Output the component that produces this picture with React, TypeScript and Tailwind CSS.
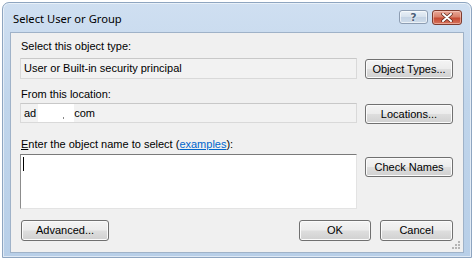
const btn =
  "h-[20px] rounded-[3px] border border-[#707070] bg-[linear-gradient(to_bottom,#f4f4f4_0%,#ececec_48%,#dedede_52%,#d0d0d0_100%)] shadow-[inset_0_0_0_1px_#fbfbfb] text-[11px] text-black flex items-center justify-center leading-none font-['Liberation_Sans',Arial,sans-serif]";

export default function App() {
  return (
    <div className="w-[476px] h-[262px] bg-white overflow-hidden font-['Liberation_Sans',Arial,sans-serif]">
      <div className="ml-[2px] mt-[2px] w-[470px] h-[256px] rounded-t-[7px] border border-[#8ea5c0] bg-[linear-gradient(to_bottom,#cfdff1_0%,#c0d5eb_40%,#b8cfe8_100%)] shadow-[inset_0_0_0_1px_rgba(255,255,255,0.55)] flex flex-col">
        {/* title bar */}
        <div className="h-[29px] flex items-start pl-[10px] pr-[9px]">
          <span className="mt-[8px] text-[11.2px] leading-[15px] text-black font-['Noto_Sans',sans-serif]">
            Select User or Group
          </span>
          <div className="ml-auto mt-[7px] flex items-start gap-[4px]">
            <div className="w-[29px] h-[14px] rounded-[3px] border border-[#8d9db2] bg-[linear-gradient(to_bottom,#e9f0f7_0%,#d6e1ed_50%,#c4d3e4_52%,#cfdcea_100%)] shadow-[inset_0_0_0_1px_rgba(255,255,255,0.6)] flex items-center justify-center">
              <span className="text-[11px] leading-none font-bold text-[#4c5f78] [text-shadow:0_0_1px_#fff,0_0_2px_#fff] font-['DejaVu_Sans',sans-serif]">?</span>
            </div>
            <div className="w-[30px] h-[15px] rounded-[3px] border border-[#7d3b2f] bg-[linear-gradient(to_bottom,#eaa898_0%,#d9806b_45%,#c64a33_55%,#d5735c_100%)] shadow-[inset_0_0_0_1px_rgba(255,220,210,0.5)] flex items-center justify-center">
              <svg width="12" height="9" viewBox="0 0 12 9">
                <path d="M2 1 L10 8 M10 1 L2 8" stroke="#5a2418" strokeWidth="3.4" strokeLinecap="round" />
                <path d="M2 1 L10 8 M10 1 L2 8" stroke="#ffffff" strokeWidth="2" strokeLinecap="round" />
              </svg>
            </div>
          </div>
        </div>

        {/* client area */}
        <div className="relative mx-[7px] h-[221px] bg-[#f0f0f0] border border-[#9fb2c8] flex flex-col pl-[9px] pr-[10px] text-[11px] leading-[13px] text-black">
          <div className="mt-[7px] pl-[1px]">Select this object type:</div>
          <div className="mt-[5px] flex items-start gap-[8px]">
            <div className="w-[337px] h-[21px] border border-[#d9d9d9] border-t-[#c8c8c8] bg-[#f2f2f2] flex items-center pl-[3px]">
              User or Built-in security principal
            </div>
            <div className={btn + " mt-[1px] w-[88px]"}>Object Types...</div>
          </div>

          <div className="mt-[9px] pl-[1px]">From this location:</div>
          <div className="mt-[2px] flex items-start gap-[8px]">
            <div className="w-[337px] h-[20px] border border-[#d9d9d9] border-t-[#c8c8c8] bg-[#f2f2f2] flex items-stretch pl-[3px]">
              <span className="flex items-center">ad</span>
              <span className="w-[36px] ml-[2px] bg-white flex items-end justify-center pb-[3px]">
                <span className="ml-[14px] w-[1px] h-[2px] bg-[#888]" />
              </span>
              <span className="flex items-center">com</span>
            </div>
            <div className={btn + " mt-[1px] w-[88px]"}>Locations...</div>
          </div>

          <div className="mt-[14px] pl-[1px]">
            <span className="underline">E</span>nter the object name to select (
            <span className="text-[#0066cc] underline">examples</span>):
          </div>
          <div className="mt-[3px] flex items-start gap-[8px]">
            <div className="w-[337px] h-[55px] bg-white border border-[#e3e3e3] border-t-[#7a7a7a] border-l-[#8c8c8c] pl-[2px] pt-[2px]">
              <div className="w-[1px] h-[14px] bg-black" />
            </div>
            <div className={btn + " mt-[3px] w-[88px]"}>Check Names</div>
          </div>

          <div className="mt-[11px] flex items-start">
            <div className={btn + " ml-[1px] w-[88px] h-[21px]"}>Advanced...</div>
            <div className={btn + " ml-auto w-[72px] h-[21px]"}>OK</div>
            <div className={btn + " ml-[9px] w-[73px] h-[21px]"}>Cancel</div>
          </div>

          {/* size grip */}
          <div className="absolute right-[3px] bottom-[3px] w-[8px] h-[8px]">
            <div className="absolute right-0 bottom-0 w-[2px] h-[2px] bg-[#b5b5b5]" />
            <div className="absolute right-[3px] bottom-0 w-[2px] h-[2px] bg-[#b5b5b5]" />
            <div className="absolute right-[6px] bottom-0 w-[2px] h-[2px] bg-[#b5b5b5]" />
            <div className="absolute right-0 bottom-[3px] w-[2px] h-[2px] bg-[#b5b5b5]" />
            <div className="absolute right-[3px] bottom-[3px] w-[2px] h-[2px] bg-[#b5b5b5]" />
            <div className="absolute right-0 bottom-[6px] w-[2px] h-[2px] bg-[#b5b5b5]" />
          </div>
        </div>
      </div>
    </div>
  );
}
